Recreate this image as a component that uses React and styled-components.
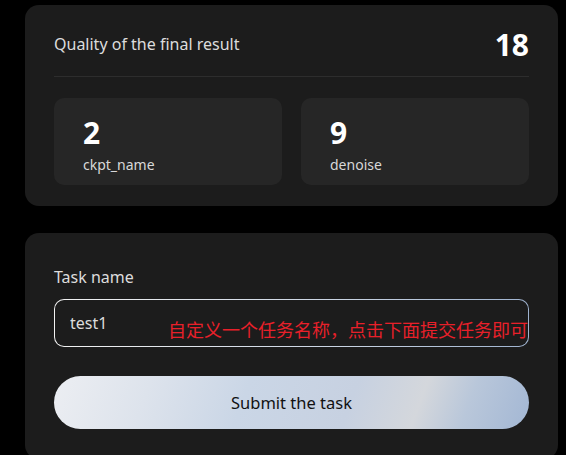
import styled, { createGlobalStyle } from "styled-components";

const GlobalStyle = createGlobalStyle`
  html, body {
    margin: 0;
    background: #000;
    font-family: "Noto Sans", "Noto Sans CJK SC", sans-serif;
  }
`;

const stats = [
  { value: 2, label: "ckpt_name" },
  { value: 9, label: "denoise" },
];

const App = () => {
  return (
    <Page>
      <GlobalStyle />
      <Card>
        <Header>
          <Title>Quality of the final result</Title>
          <Total>18</Total>
        </Header>
        <StatGrid>
          {stats.map((s) => (
            <StatBox key={s.label}>
              <StatValue>{s.value}</StatValue>
              <StatLabel>{s.label}</StatLabel>
            </StatBox>
          ))}
        </StatGrid>
      </Card>

      <FormCard>
        <Label>Task name</Label>
        <InputBorder>
          <Input defaultValue="test1" />
          <Hint>自定义一个任务名称，点击下面提交任务即可</Hint>
        </InputBorder>
        <SubmitButton>Submit the task</SubmitButton>
      </FormCard>
    </Page>
  );
};

const Page = styled.div`
  display: flex;
  flex-direction: column;
  gap: 27px;
  padding: 5px 8px 0 25px;
`;

const Card = styled.section`
  background: #1c1c1c;
  border-radius: 14px;
  padding: 20px 29px 21px;
`;

const Header = styled.div`
  display: flex;
  align-items: center;
  justify-content: space-between;
  height: 38px;
  padding-bottom: 13px;
  border-bottom: 1px solid #2d2d2d;
`;

const Title = styled.h2`
  margin: 0;
  font-size: 16px;
  font-weight: 400;
  color: #dcdcdc;
`;

const Total = styled.span`
  font-size: 30px;
  font-weight: 700;
  color: #fff;
`;

const StatGrid = styled.div`
  display: grid;
  grid-template-columns: 1fr 1fr;
  gap: 19px;
  margin-top: 21px;
`;

const StatBox = styled.div`
  background: #262626;
  border-radius: 10px;
  height: 87px;
  box-sizing: border-box;
  padding: 16px 29px 0;
  display: flex;
  flex-direction: column;
`;

const StatValue = styled.span`
  font-size: 30px;
  font-weight: 700;
  line-height: 38px;
  color: #fff;
`;

const StatLabel = styled.span`
  font-size: 14px;
  color: #d8d8d8;
  line-height: 22px;
  margin-top: 2px;
`;

const FormCard = styled(Card)`
  padding: 29px 29px 30px;
  display: flex;
  flex-direction: column;
`;

const Label = styled.label`
  font-size: 16px;
  color: #dcdcdc;
  line-height: 30px;
  margin-bottom: 7px;
`;

const InputBorder = styled.div`
  position: relative;
  padding: 1px;
  border-radius: 10px;
  background: linear-gradient(90deg, #f2f2f2 0%, #c9d4e3 60%, #9fb3cf 100%);
`;

const Input = styled.input`
  display: block;
  width: 100%;
  box-sizing: border-box;
  height: 46px;
  border: none;
  outline: none;
  border-radius: 9px;
  background: #1c1c1c;
  color: #dcdcdc;
  font-family: inherit;
  font-size: 16px;
  padding: 0 15px;
`;

const Hint = styled.span`
  position: absolute;
  right: 1px;
  top: 17px;
  font-family: "Noto Sans CJK SC", sans-serif;
  font-size: 18px;
  line-height: 26px;
  color: #e8202a;
  white-space: nowrap;
  pointer-events: none;
`;

const SubmitButton = styled.button`
  margin-top: 29px;
  height: 53px;
  border: none;
  border-radius: 27px;
  font-family: inherit;
  font-size: 16.5px;
  color: #111;
  cursor: pointer;
  background: linear-gradient(
    110deg,
    #eceef2 0%,
    #dde3ec 20%,
    #cad6e6 40%,
    #c7d1e1 62%,
    #d4d7dc 76%,
    #b9c7da 86%,
    #a3b7d4 100%
  );
`;

export default App;
